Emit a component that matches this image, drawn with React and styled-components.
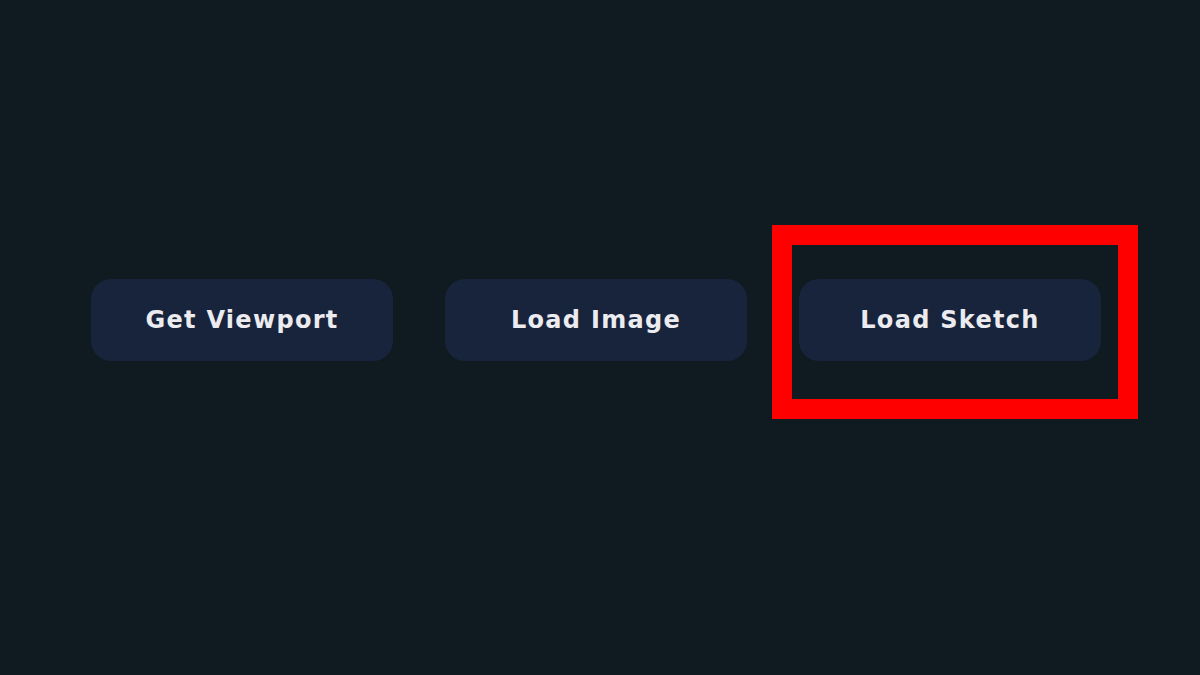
import React from 'react';
import styled, { createGlobalStyle } from 'styled-components';

const Global = createGlobalStyle`
  html, body {
    margin: 0;
    padding: 0;
    background-color: #0f1a21;
  }
`;

const Page = styled.div`
  width: 1200px;
  height: 675px;
  background-color: #0f1a21;
  font-family: "DejaVu Sans", "Open Sans", sans-serif;
  overflow: hidden;
`;

const Row = styled.div`
  display: flex;
  flex-direction: row;
  gap: 52px;
  padding: 279px 0 0 91px;
`;

const Slot = styled.div`
  position: relative;
`;

const Button = styled.button`
  display: flex;
  align-items: center;
  justify-content: center;
  width: 302px;
  height: 82px;
  padding: 0 0 1px;
  border: none;
  border-radius: 20px;
  background-color: #18243c;
  color: #ececf0;
  font-family: inherit;
  font-size: 24px;
  font-weight: 700;
  letter-spacing: 1.3px;
  cursor: pointer;
`;

const Highlight = styled.span`
  position: absolute;
  top: -54px;
  left: -27px;
  right: -37px;
  bottom: -58px;
  border: 20px solid #ff0000;
  pointer-events: none;
`;

const buttons = [
  { label: 'Get Viewport' },
  { label: 'Load Image' },
  { label: 'Load Sketch', marked: true },
];

const App = () => (
  <Page>
    <Global />
    <Row>
      {buttons.map(b => (
        <Slot key={b.label}>
          <Button>{b.label}</Button>
          {b.marked && <Highlight />}
        </Slot>
      ))}
    </Row>
  </Page>
);

export default App;
